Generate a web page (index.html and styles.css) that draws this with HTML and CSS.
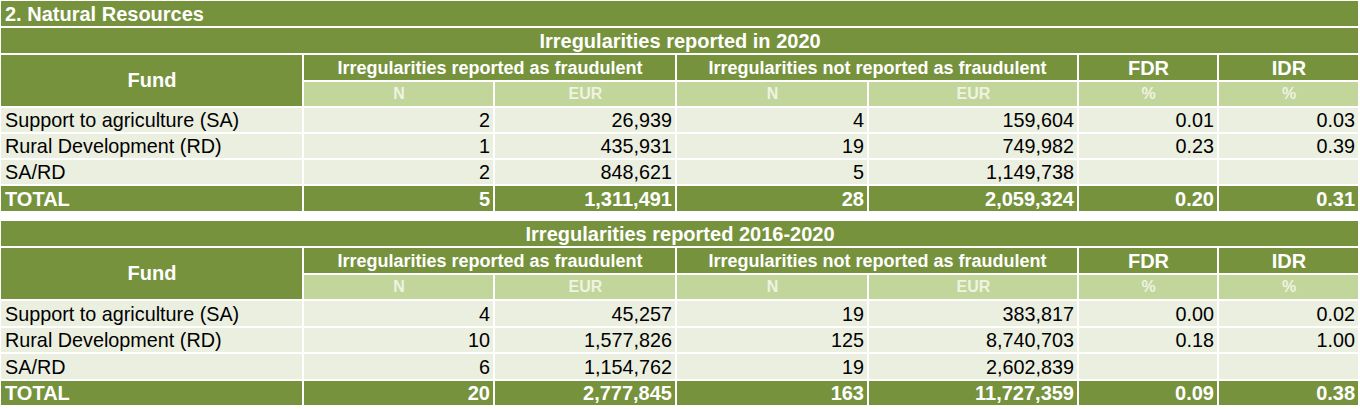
FILE: index.html
```html
<!DOCTYPE html>
<html lang="en">
<head>
<meta charset="utf-8">
<title>2. Natural Resources</title>
<link rel="stylesheet" href="styles.css">
</head>
<body>
<table class="grid grid-first">
  <colgroup>
    <col class="c-fund"><col class="c-n1"><col class="c-eur1"><col class="c-n2"><col class="c-eur2"><col class="c-fdr"><col class="c-idr">
  </colgroup>
  <tr class="r25"><td class="title" colspan="7">2. Natural Resources</td></tr>
  <tr class="r25"><td class="year" colspan="7">Irregularities reported in 2020</td></tr>
  <tr class="r25">
    <td class="fund" rowspan="2">Fund</td>
    <td class="grp" colspan="2">Irregularities reported as fraudulent</td>
    <td class="grp" colspan="2">Irregularities not reported as fraudulent</td>
    <td class="grp big">FDR</td>
    <td class="grp big">IDR</td>
  </tr>
  <tr class="r24">
    <td class="sub">N</td><td class="sub">EUR</td><td class="sub">N</td><td class="sub">EUR</td><td class="sub">%</td><td class="sub">%</td>
  </tr>
  <tr class="r24 data">
    <td class="lbl">Support to agriculture (SA)</td><td>2</td><td>26,939</td><td>4</td><td>159,604</td><td>0.01</td><td>0.03</td>
  </tr>
  <tr class="r24 data">
    <td class="lbl">Rural Development (RD)</td><td>1</td><td>435,931</td><td>19</td><td>749,982</td><td>0.23</td><td>0.39</td>
  </tr>
  <tr class="r24 data">
    <td class="lbl">SA/RD</td><td>2</td><td>848,621</td><td>5</td><td>1,149,738</td><td></td><td></td>
  </tr>
  <tr class="r25 total">
    <td class="lbl">TOTAL</td><td>5</td><td>1,311,491</td><td>28</td><td>2,059,324</td><td>0.20</td><td>0.31</td>
  </tr>
</table>

<table class="grid grid-second">
  <colgroup>
    <col class="c-fund"><col class="c-n1"><col class="c-eur1"><col class="c-n2"><col class="c-eur2"><col class="c-fdr"><col class="c-idr">
  </colgroup>
  <tr class="r25"><td class="year" colspan="7">Irregularities reported 2016-2020</td></tr>
  <tr class="r25">
    <td class="fund" rowspan="2">Fund</td>
    <td class="grp" colspan="2">Irregularities reported as fraudulent</td>
    <td class="grp" colspan="2">Irregularities not reported as fraudulent</td>
    <td class="grp big">FDR</td>
    <td class="grp big">IDR</td>
  </tr>
  <tr class="r24">
    <td class="sub">N</td><td class="sub">EUR</td><td class="sub">N</td><td class="sub">EUR</td><td class="sub">%</td><td class="sub">%</td>
  </tr>
  <tr class="r25 data">
    <td class="lbl">Support to agriculture (SA)</td><td>4</td><td>45,257</td><td>19</td><td>383,817</td><td>0.00</td><td>0.02</td>
  </tr>
  <tr class="r24 data">
    <td class="lbl">Rural Development (RD)</td><td>10</td><td>1,577,826</td><td>125</td><td>8,740,703</td><td>0.18</td><td>1.00</td>
  </tr>
  <tr class="r25 data">
    <td class="lbl">SA/RD</td><td>6</td><td>1,154,762</td><td>19</td><td>2,602,839</td><td></td><td></td>
  </tr>
  <tr class="r24 total">
    <td class="lbl">TOTAL</td><td>20</td><td>2,777,845</td><td>163</td><td>11,727,359</td><td>0.09</td><td>0.38</td>
  </tr>
</table>
</body>
</html>
```

FILE: styles.css
```css
html, body {
  margin: 0;
  padding: 0;
  background: #ffffff;
}

body {
  font-family: "Liberation Sans", Arial, sans-serif;
  color: #000000;
  overflow: hidden;
}

.grid {
  table-layout: fixed;
  border-collapse: separate;
  border-spacing: 2px;
  width: 1361px;
  margin: -1px 0 0 -1px;
}

.grid-second {
  margin-top: 6px;
}

.c-fund { width: 301px; }
.c-n1 { width: 189px; }
.c-eur1 { width: 180px; }
.c-n2 { width: 190px; }
.c-eur2 { width: 208px; }
.c-fdr { width: 138px; }
.c-idr { width: 139px; }

.grid td {
  padding: 0 3px 0 4px;
  white-space: nowrap;
  overflow: hidden;
}

.r25 { height: 25px; }
.r24 { height: 24px; }

.title {
  background: #76923c;
  color: #ffffff;
  font-weight: bold;
  font-size: 20px;
  line-height: 20px;
  text-align: left;
  vertical-align: middle;
}

.year {
  background: #76923c;
  color: #ffffff;
  font-weight: bold;
  font-size: 20px;
  line-height: 20px;
  text-align: center;
  vertical-align: middle;
}

.fund {
  background: #76923c;
  color: #ffffff;
  font-weight: bold;
  font-size: 20px;
  text-align: center;
  vertical-align: middle;
}

.grp {
  background: #76923c;
  color: #ffffff;
  font-weight: bold;
  font-size: 18px;
  line-height: 20px;
  text-align: center;
  vertical-align: middle;
}

.grp.big {
  font-size: 20px;
}

.sub {
  background: #c2d69b;
  color: #eef3e2;
  font-weight: bold;
  font-size: 16px;
  line-height: 18px;
  text-align: center;
  vertical-align: middle;
}

.data td {
  background: #ebefe0;
  font-size: 19.8px;
  line-height: 20px;
  text-align: right;
  vertical-align: middle;
}

.total td {
  background: #76923c;
  color: #ffffff;
  font-weight: bold;
  font-size: 20px;
  line-height: 20px;
  text-align: right;
  vertical-align: middle;
}

.data td.lbl,
.total td.lbl {
  text-align: left;
}
```
